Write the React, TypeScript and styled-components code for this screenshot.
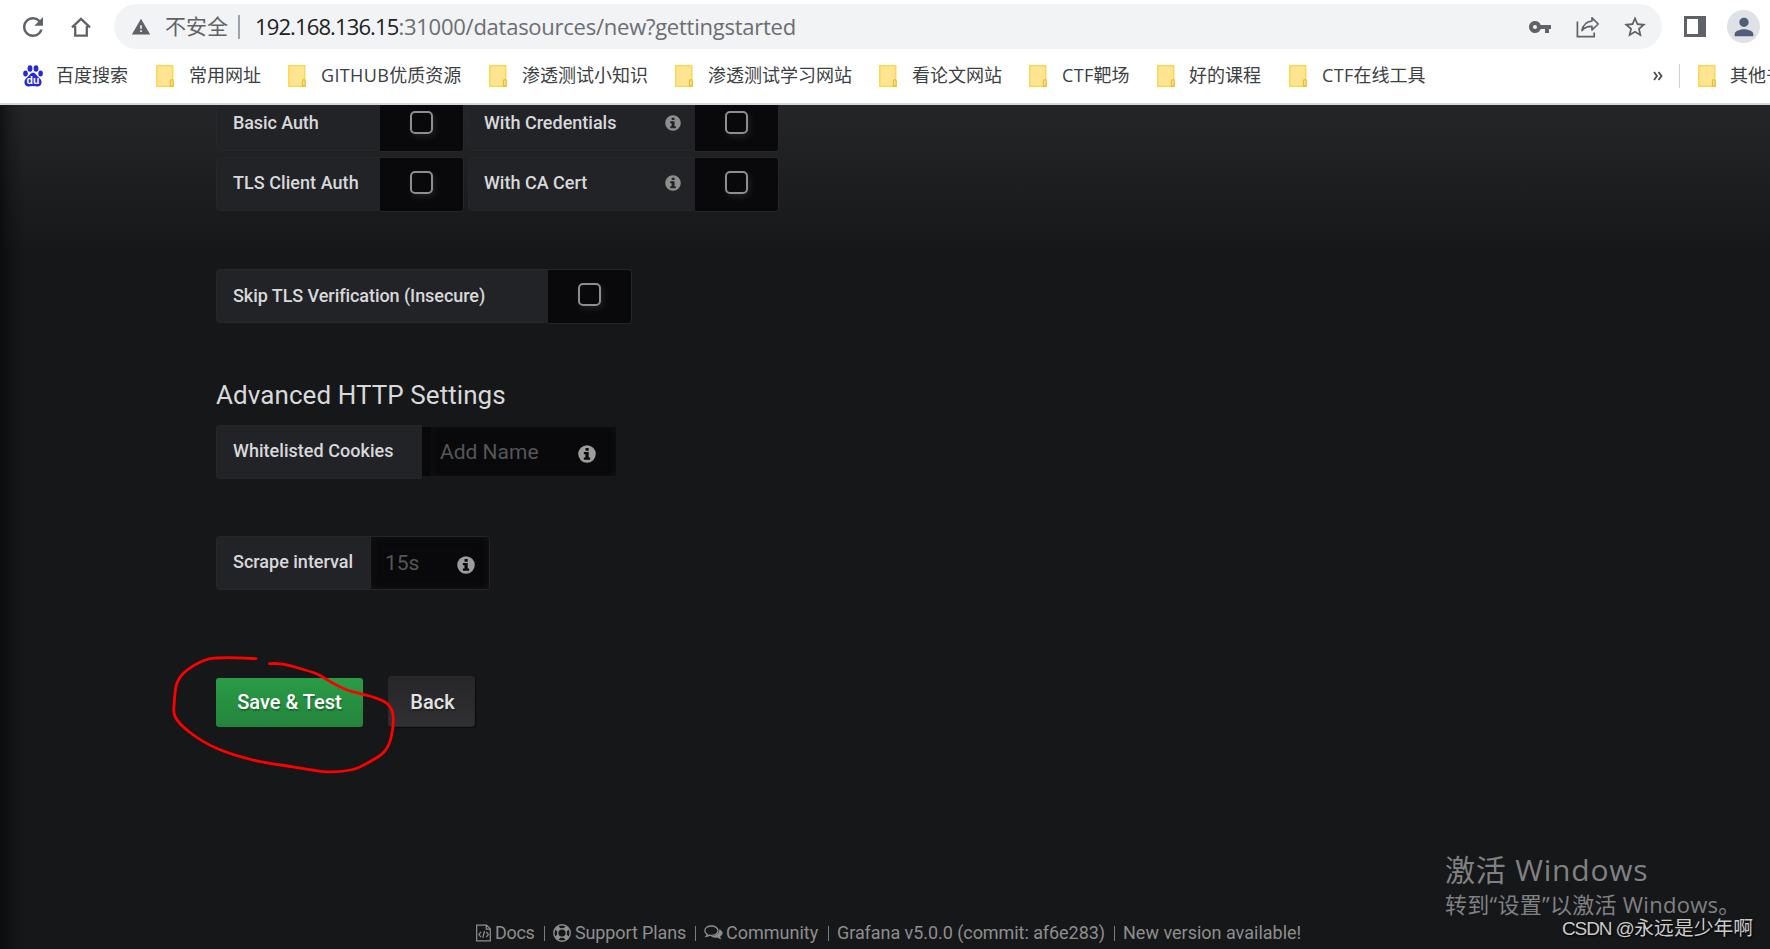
import React from 'react';
import styled, { createGlobalStyle, css } from 'styled-components';
import { MdRefresh, MdWarning, MdVpnKey, MdStarBorder, MdPerson } from 'react-icons/md';

const GlobalStyle = createGlobalStyle`
  * { box-sizing: border-box; }
  body { margin: 0; background: #161719; overflow: hidden; }
`;

const uiFont = '"Open Sans", "Noto Sans CJK SC", sans-serif';

const Window = styled.div`
  position: relative;
  width: 1770px;
  height: 949px;
  display: flex;
  flex-direction: column;
  overflow: hidden;
  font-family: Roboto, sans-serif;
`;

/* ---------- browser chrome ---------- */

const Toolbar = styled.div`
  height: 53px;
  flex: none;
  display: flex;
  align-items: center;
  padding: 0 10px 0 18px;
  background: #fff;
  color: #5f6368;
`;

const ToolIcon = styled.span<{ $gap?: number }>`
  display: flex;
  flex: none;
  margin-left: ${p => p.$gap ?? 0}px;
`;

const AddressBar = styled.div`
  width: 1548px;
  height: 45px;
  margin-left: 23px;
  padding: 0 14px 0 17px;
  display: flex;
  align-items: center;
  border-radius: 23px;
  background: #f1f3f4;
`;

const Security = styled.span`
  width: 63px;
  margin-left: 14px;
  padding-bottom: 2px;
  font: 21px/30px ${uiFont};
  white-space: nowrap;
`;

const Divider = styled.span<{ $gap: number; $color: string; $width: number }>`
  width: ${p => p.$width}px;
  height: 24px;
  flex: none;
  margin-left: ${p => p.$gap}px;
  background: ${p => p.$color};
`;

const Url = styled.span`
  flex: 1;
  margin-left: 15px;
  padding-bottom: 2px;
  font: 22px/30px ${uiFont};
  letter-spacing: -0.25px;
  white-space: nowrap;
  color: #6b6e72;
`;

const Host = styled.span`
  color: #202124;
  letter-spacing: -0.88px;
`;

const Avatar = styled.span`
  width: 33px;
  height: 33px;
  margin-left: 21px;
  display: flex;
  align-items: center;
  justify-content: center;
  border-radius: 50%;
  background: #dee1e6;
  color: #505f79;
`;

const BookmarkBar = styled.div`
  height: 52px;
  flex: none;
  display: flex;
  align-items: center;
  padding: 0 0 5px 23px;
  border-bottom: 2px solid #d6d8da;
  background: #fff;
  color: #3c4043;
`;

const BookmarkItem = styled.span<{ $width: number }>`
  width: ${p => p.$width}px;
  flex: none;
  display: flex;
  align-items: center;
`;

const BookmarkText = styled.span<{ $gap: number }>`
  flex: none;
  margin-left: ${p => p.$gap}px;
  padding-bottom: 1px;
  font: 18px/26px ${uiFont};
  white-space: nowrap;
`;

const Wide = styled.span`
  letter-spacing: 0.35px;
`;

const FolderShape = styled.svg`
  width: 18px;
  height: 22px;
  flex: none;
  margin-top: 1px;
`;

const Overflow = styled.span`
  flex: none;
  margin-left: 226px;
  width: 26px;
  display: flex;
`;

/* ---------- page ---------- */

const Page = styled.main`
  position: relative;
  flex: 1;
  padding-left: 216px;
  overflow: hidden;
  background: linear-gradient(180deg, #232527 0, #222426 18px, #161719 150px);
  color: #d8d9da;

  &::before {
    content: '';
    position: absolute;
    inset: 0 auto 0 0;
    width: 26px;
    background: linear-gradient(90deg, rgba(0, 0, 0, 0.5), rgba(0, 0, 0, 0.18) 45%, transparent);
  }
`;

const FormRow = styled.div<{ $top: number }>`
  display: flex;
  align-items: flex-start;
  height: 54px;
  margin-top: ${p => p.$top}px;
`;

const Label = styled.label<{ $width: number; $drop?: number; $inset?: number; $spacing?: number }>`
  width: ${p => p.$width}px;
  height: 54px;
  display: flex;
  align-items: center;
  justify-content: space-between;
  padding: ${p => p.$drop ?? 0}px 14px 2px ${p => p.$inset ?? 16}px;
  border: 1px solid #262628;
  border-right: 0;
  border-radius: 4px 0 0 4px;
  background: #222327;
  font-size: 18px;
  font-weight: 500;
  line-height: 24px;
  letter-spacing: ${p => p.$spacing ?? 0}px;
  white-space: nowrap;

  svg { color: #8e8e8e; }
`;

const Switch = styled.span`
  width: 84px;
  height: 55px;
  margin-right: 4px;
  display: flex;
  justify-content: center;
  padding: 13px 1px 0 0;
  border: 1px solid #262628;
  border-left: 0;
  border-radius: 0 4px 4px 0;
  background: #09090b;
`;

const Box = styled.i`
  width: 23px;
  height: 23px;
  border: 2px solid #8e8e8e;
  border-radius: 5px;
  box-shadow: 2px 3px 7px rgba(140, 140, 140, 0.16);
`;

const Heading = styled.h3`
  margin: 54px 0 0;
  height: 48px;
  font-size: 26px;
  font-weight: 400;
  line-height: 36px;
  letter-spacing: 0.07px;
`;

const field = css`
  display: flex;
  align-items: center;
  background: #09090b;
  color: #555659;
  font-size: 21px;
  line-height: 28px;

  svg { color: #9c9c9c; }
`;

const CookieField = styled.div`
  ${field}
  width: 194px;
  height: 49px;
  margin-top: 2px;
  padding-left: 9px;
`;

const CookieInput = styled.span`
  flex: 1;
  height: 49px;
  display: flex;
  align-items: center;
  padding: 0 20px 0 9px;
  justify-content: space-between;
  box-shadow: inset 0 0 7px #141416;

  svg { margin-top: 4px; }
`;

const IntervalField = styled.div`
  ${field}
  width: 120px;
  height: 54px;
  justify-content: space-between;
  padding: 0 14px 0 14px;
  border: 1px solid #262628;
  border-radius: 0 4px 4px 0;
  box-shadow: inset 0 0 8px #151517;

  svg { margin-top: 3px; }
`;

const Actions = styled.div`
  display: flex;
  align-items: flex-end;
  height: 51px;
  margin-top: 86px;
`;

const Button = styled.button<{ $primary?: boolean }>`
  width: ${p => (p.$primary ? 147 : 87)}px;
  height: ${p => (p.$primary ? 49 : 51)}px;
  margin: 0 25px 0 0;
  padding: ${p => (p.$primary ? '0 0 2px' : '0 0 0 2px')};
  border: ${p => (p.$primary ? '0' : '1px solid #29292b')};
  border-radius: 3px;
  background: ${p => (p.$primary ? 'linear-gradient(#299c46, #23843b)' : 'linear-gradient(#262628, #303032)')};
  box-shadow: ${p => (p.$primary ? 'none' : '1px 1px 1px #0c0c0d')};
  color: ${p => (p.$primary ? '#fff' : '#e3e3e3')};
  font: 500 20px/24px Roboto, sans-serif;
  text-shadow: 1px 2px 1px rgba(0, 0, 0, 0.25);
`;

const Footer = styled.footer`
  display: flex;
  align-items: center;
  height: 24px;
  margin: 194px 0 0 260px;
  color: #8e8e8e;
  font-size: 18px;
  line-height: 24px;
  white-space: nowrap;
`;

const FooterItem = styled.span<{ $width: number; $spacing?: number; $gap?: number }>`
  width: ${p => p.$width}px;
  display: flex;
  align-items: center;
  gap: ${p => p.$gap ?? 4}px;
  letter-spacing: ${p => p.$spacing ?? 0}px;
`;

const FooterBar = styled.span`
  width: 1px;
  height: 15px;
  margin: 1px 8px 0 0;
  background: #7c7c7d;
`;

const Scribble = styled.svg`
  position: absolute;
  left: 160px;
  top: 640px;
`;

const Activation = styled.div`
  position: absolute;
  left: 1445px;
  top: 848px;
  color: #808183;
  font-family: ${uiFont};
  white-space: nowrap;
`;

const ActivationTitle = styled.div`
  font-size: 30px;
  line-height: 44px;
  letter-spacing: 0.8px;
`;

const ActivationText = styled.div`
  margin-top: -3px;
  font-size: 22px;
  line-height: 30px;
  letter-spacing: 0.27px;
`;

const Credit = styled.div`
  position: absolute;
  left: 1562px;
  top: 914px;
  font: 19.8px/28px "Liberation Sans", "Noto Sans CJK SC", sans-serif;
  color: #cacaca;
  text-shadow: 1px 1px 2px #000;
  white-space: nowrap;
`;

const Latin = styled.span`
  font-size: 19px;
  letter-spacing: -1.1px;
  margin-right: 0.5px;
`;

/* ---------- icons ---------- */

const HomeIcon = () => (
  <svg width="20" height="20" viewBox="0 0 20 20" fill="none" stroke="currentColor" strokeWidth="2.3">
    <path d="M1 10.4 10 1.9l9 8.5M4.2 9v9.6h11.6V9" />
  </svg>
);

const ShareIcon = () => (
  <svg width="24" height="22" viewBox="0 0 24 22" fill="none" stroke="currentColor" strokeWidth="1.7">
    <path d="M1.4 5.5v15.2h16.8v-4.2" />
    <path d="M16 1.8 22.2 8 16 14v-3.600C11 10.4 8 11.6 6 14.6 6.8 9.2 10 5.8 16 5z" strokeLinejoin="round" />
  </svg>
);

const PanelIcon = () => (
  <svg width="22" height="21" viewBox="0 0 22 21">
    <path fill="currentColor" fillRule="evenodd" d="M0 0h22v21H0zM3 3v15h11V3z" />
  </svg>
);

const InfoIcon = ({ size }: { size: number }) => (
  <svg width={size} height={size} viewBox="0 0 16 16">
    <path
      fill="currentColor"
      fillRule="evenodd"
      d="M8 .2a7.8 7.8 0 1 0 0 15.600A7.8 7.8 0 0 0 8 .2zM6.700 2.700h2.800v2.400H6.700zM5.200 6.300h4.300v4.900h1.300v2H5.200v-2h1.400V8.300H5.200z"
    />
  </svg>
);

const BaiduIcon = () => (
  <svg width="20" height="22" viewBox="0 0 20 22" fill="#2529dc">
    <ellipse cx="2.5" cy="8.5" rx="2.3" ry="3" />
    <ellipse cx="7" cy="3.5" rx="2.4" ry="3.3" />
    <ellipse cx="13" cy="3.5" rx="2.4" ry="3.3" />
    <ellipse cx="17.6" cy="8.5" rx="2.3" ry="3" />
    <path d="M10 7.8c-2.6 0-3.3 2.4-5 4C3 13.6 1.2 15 1.4 17.6c.2 2.6 2 3.9 4.1 3.9 1.6 0 3-.4 4.5-.4s2.900.4 4.5.4c2.1 0 3.900-1.3 4.100-3.900.2-2.600-1.600-4-3.600-5.800-1.700-1.600-2.400-4-5-4z" />
    <text x="10" y="19.4" textAnchor="middle" fontFamily="Liberation Sans, sans-serif" fontWeight="700" fontSize="10.5" fill="#fff">du</text>
  </svg>
);

const Folder = () => (
  <FolderShape viewBox="0 0 18 22">
    <path d="M.8.8h15.9v20.4H.8z" fill="#ffe591" stroke="#fbd754" strokeWidth="1.5" />
    <path d="M14.5 21v-5q0-1.400 1.300-1.400t1.400 1.400v5z" fill="#ffe591" stroke="#e9bd34" strokeWidth="1.3" />
  </FolderShape>
);

const ChevronsIcon = () => (
  <svg width="10" height="10" viewBox="0 0 10 10" fill="none" stroke="#4a4d51" strokeWidth="1.8">
    <path d="m1 1 3 4-3 4M5.500 1l3 4-3 4" />
  </svg>
);

const FileCodeIcon = () => (
  <svg width="15" height="18" viewBox="0 0 15.700 18" fill="none" stroke="currentColor" strokeWidth="1.3">
    <path d="M.7.700H11l4 4v12.600H.7zM10.700.700v4.300H15M5.300 7.800 3 10.600l2.300 2.800M10.700 7.800l2.300 2.800-2.300 2.800M8.900 6.900l-1.800 7.300" />
  </svg>
);

const LifeRingIcon = () => (
  <svg width="18" height="18" viewBox="0 0 18 18" fill="none" stroke="currentColor">
    <circle cx="9" cy="9" r="8.2" strokeWidth="1.4" />
    <circle cx="9" cy="9" r="4.3" strokeWidth="1.4" />
    <path strokeWidth="4.6" d="m3.300 3.300 2.800 2.800M14.700 3.300l-2.800 2.800M3.300 14.700l2.800-2.800M14.700 14.700l-2.800-2.800" />
  </svg>
);

const CommentsIcon = () => (
  <svg width="19" height="16" viewBox="0 0 19 16" fill="none" stroke="currentColor" strokeWidth="1.3">
    <path d="M7.400 1C3.700 1 .8 3 .8 5.700c0 1.500 1 2.900 2.500 3.700-.1.800-.5 1.400-1.100 2 1.300-.2 2.300-.7 3.200-1.300.6.200 1.300.2 2 .2 3.700 0 6.600-2 6.600-4.600S11.100 1 7.400 1z" />
    <path d="M15.600 4.600c1.600.8 2.700 2 2.700 3.500 0 1.400-1 2.700-2.500 3.500.1.800.6 1.500 1.300 2.200-1.500-.2-2.700-.8-3.500-1.500-2.400.4-4.700 0-6.200-1 4.300 0 8.200-2.300 8.200-6.700z" fill="currentColor" strokeWidth=".6" />
  </svg>
);

type Point = [number, number];

const stroke: Point[] = [
  [96, 18.7], [77, 17.8], [57, 18], [44, 20.5], [26, 31], [17, 43], [14.3, 62], [15.2, 77], [30, 92.5], [56, 108],
  [93, 120], [133, 126.8], [167, 131.8], [193, 129.5], [211, 121], [224, 112], [231, 98], [233, 75], [227, 63.5], [213, 57],
  [187, 50], [171, 42], [157, 34], [140, 28.5], [123, 24.2], [116, 23.5], [109.5, 23.7],
];

const gapAfter = 0;

const smooth = (pts: Point[]) =>
  pts.slice(1).reduce((d, p, i) => {
    const a = pts[Math.max(i - 1, gapAfter)];
    const b = pts[i];
    const n = pts[Math.min(i + 2, pts.length - 1)];
    return `${d}C${b[0] + (p[0] - a[0]) / 6} ${b[1] + (p[1] - a[1]) / 6} ${p[0] - (n[0] - b[0]) / 6} ${p[1] - (n[1] - b[1]) / 6} ${p[0]} ${p[1]}`;
  }, `M${pts[0][0]} ${pts[0][1]}`);

/* ---------- data ---------- */

const bookmarks = [
  { latin: '', text: '常用网址', width: 132, gap: 15 },
  { latin: 'GITHUB', text: '优质资源', width: 201, gap: 15 },
  { latin: '', text: '渗透测试小知识', width: 186, gap: 15 },
  { latin: '', text: '渗透测试学习网站', width: 204, gap: 15 },
  { latin: '', text: '看论文网站', width: 150, gap: 15 },
  { latin: 'CTF', text: '靶场', width: 128, gap: 15 },
  { latin: '', text: '好的课程', width: 132, gap: 14 },
  { latin: 'CTF', text: '在线工具', width: 138, gap: 15 },
];

const authRows = [
  { left: 'Basic Auth', right: 'With Credentials', top: -8, spacing: -0.1 },
  { left: 'TLS Client Auth', right: 'With CA Cert', top: 6, spacing: 0.05 },
];

export default function App() {
  return (
    <Window>
      <GlobalStyle />
      <Toolbar>
        <ToolIcon><MdRefresh size={30} /></ToolIcon>
        <ToolIcon $gap={23}><HomeIcon /></ToolIcon>
        <AddressBar>
          <ToolIcon><MdWarning size={20} /></ToolIcon>
          <Security>不安全</Security>
          <Divider $gap={10} $width={2} $color="#9fa2a6" />
          <Url><Host>192.168.136.15</Host>:31000/datasources/new?gettingstarted</Url>
          <ToolIcon><MdVpnKey size={24} /></ToolIcon>
          <ToolIcon $gap={24}><ShareIcon /></ToolIcon>
          <ToolIcon $gap={22}><MdStarBorder size={26} /></ToolIcon>
        </AddressBar>
        <ToolIcon $gap={22}><PanelIcon /></ToolIcon>
        <Avatar><MdPerson size={28} /></Avatar>
      </Toolbar>
      <BookmarkBar>
        <BookmarkItem $width={133}>
          <BaiduIcon />
          <BookmarkText $gap={13}>百度搜索</BookmarkText>
        </BookmarkItem>
        {bookmarks.map(b => (
          <BookmarkItem key={b.text} $width={b.width}>
            <Folder />
            <BookmarkText $gap={b.gap}>{b.latin && <Wide>{b.latin}</Wide>}{b.text}</BookmarkText>
          </BookmarkItem>
        ))}
        <Overflow><ChevronsIcon /></Overflow>
        <Divider $gap={0} $width={1} $color="#cfd1d3" />
        <ToolIcon $gap={18}><Folder /></ToolIcon>
        <BookmarkText $gap={14}>其他书签</BookmarkText>
      </BookmarkBar>
      <Page>
        {authRows.map(r => (
          <FormRow key={r.left} $top={r.top}>
            <Label $width={164} $spacing={r.spacing}>{r.left}</Label>
            <Switch><Box /></Switch>
            <Label $width={227} $inset={15}>{r.right}<InfoIcon size={16} /></Label>
            <Switch><Box /></Switch>
          </FormRow>
        ))}
        <FormRow $top={58}>
          <Label $width={332} $drop={2} $spacing={-0.06}>Skip TLS Verification (Insecure)</Label>
          <Switch><Box /></Switch>
        </FormRow>
        <Heading>Advanced HTTP Settings</Heading>
        <FormRow $top={0}>
          <Label $width={206} $spacing={0.04}>Whitelisted Cookies</Label>
          <CookieField>
            <CookieInput>Add Name<InfoIcon size={18} /></CookieInput>
          </CookieField>
        </FormRow>
        <FormRow $top={57}>
          <Label $width={154}>Scrape interval</Label>
          <IntervalField>15s<InfoIcon size={18} /></IntervalField>
        </FormRow>
        <Actions>
          <Button $primary>Save &amp; Test</Button>
          <Button>Back</Button>
        </Actions>
        <Footer>
          <FooterItem $width={68} $spacing={-0.3}><FileCodeIcon />Docs</FooterItem>
          <FooterBar />
          <FooterItem $width={142} $spacing={-0.12}><LifeRingIcon />Support Plans</FooterItem>
          <FooterBar />
          <FooterItem $width={124} $gap={3}><CommentsIcon />Community</FooterItem>
          <FooterBar />
          <FooterItem $width={277} $spacing={-0.06}>Grafana v5.0.0 (commit: af6e283)</FooterItem>
          <FooterBar />
          <FooterItem $width={180}>New version available!</FooterItem>
        </Footer>
      </Page>
      <Scribble width="250" height="150" viewBox="0 0 250 150" fill="none" stroke="#fe0000" strokeWidth="2.8" strokeLinecap="round">
        <path d={smooth(stroke)} />
      </Scribble>
      <Activation>
        <ActivationTitle>激活 Windows</ActivationTitle>
        <ActivationText>转到“设置”以激活 Windows。</ActivationText>
      </Activation>
      <Credit><Latin>CSDN @</Latin>永远是少年啊</Credit>
    </Window>
  );
}
